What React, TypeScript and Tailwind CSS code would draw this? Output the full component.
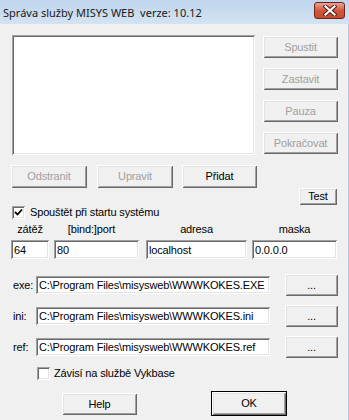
import type { ReactNode } from 'react'

const ui = "font-['Liberation_Sans',Arial,sans-serif] text-[11px] tracking-[-0.15px] leading-none"

const raised =
  'shadow-[inset_1px_1px_0_#ffffff,inset_-1px_-1px_0_#696969,inset_2px_2px_0_#e3e3e3,inset_-2px_-2px_0_#a0a0a0]'
const sunken =
  'shadow-[inset_1px_1px_0_#a0a0a0,inset_-1px_-1px_0_#ffffff,inset_2px_2px_0_#696969,inset_-2px_-2px_0_#e3e3e3]'

function Btn({
  children,
  w,
  h = 'h-[22px]',
  disabled,
  isDefault,
}: {
  children: ReactNode
  w: string
  h?: string
  disabled?: boolean
  isDefault?: boolean
}) {
  return (
    <div
      className={`${w} ${h} shrink-0 flex items-center justify-center bg-[#f0f0f0] ${raised} ${
        isDefault ? 'outline outline-1 outline-black' : ''
      } ${disabled ? 'text-[#a0a0a0]' : 'text-black'}`}
    >
      {children}
    </div>
  )
}

function Field({ value, w }: { value?: string; w: string }) {
  return (
    <div className={`${w} h-[19px] shrink-0 bg-white ${sunken} flex items-center pl-[3px] pt-[1px] text-black whitespace-pre overflow-hidden`}>
      {value}
    </div>
  )
}

function Check({ checked }: { checked?: boolean }) {
  return (
    <div className={`w-[13px] h-[13px] shrink-0 bg-white ${sunken} flex items-center justify-center`}>
      {checked && (
        <svg width="9" height="9" viewBox="0 0 9 9">
          <path d="M1 4 L3.5 6.5 L8 1.5" fill="none" stroke="#000" strokeWidth="1.8" />
        </svg>
      )}
    </div>
  )
}

function PathRow({ label, value }: { label: string; value: string }) {
  return (
    <div className="flex items-center h-[22px]">
      <div className="w-[24px] pl-[1px]">{label}</div>
      <div className={`w-[234px] h-[18px] shrink-0 bg-white ${sunken} flex items-center pl-[3px] pt-[1px] whitespace-pre overflow-hidden`}>
        {value}
      </div>
      <div className="ml-[15px]">
        <Btn w="w-[53px]">...</Btn>
      </div>
    </div>
  )
}

export default function App() {
  return (
    <div className={`w-[349px] h-[420px] overflow-hidden flex flex-col ${ui}`}>
      {/* Title bar */}
      <div className="h-[24px] shrink-0 flex items-center bg-gradient-to-b from-[#bed5ec] to-[#d4e3f2] pr-[4px]">
        <span className="pl-[3px] pt-[1px] font-['Noto_Sans','Open_Sans',sans-serif] text-[11px] tracking-normal text-[#1a1a1a] whitespace-pre mr-auto">
          Správa služby MISYS WEB  verze: 10.12
        </span>
        <div className="w-[31px] h-[17px] mt-[-3px] rounded-[3px] border border-[#6e2419] bg-gradient-to-b from-[#e8a394] via-[#d2573e] to-[#c64a30] flex items-center justify-center">
          <svg width="14" height="11" viewBox="0 0 14 11">
            <path d="M2.5 1.5 L11.5 9.5 M11.5 1.5 L2.5 9.5" stroke="#4a1a12" strokeWidth="4" strokeLinecap="square" />
            <path d="M2.5 1.5 L11.5 9.5 M11.5 1.5 L2.5 9.5" stroke="#ffffff" strokeWidth="2.2" strokeLinecap="square" />
          </svg>
        </div>
      </div>

      {/* Client area */}
      <div className="flex-1 bg-[#f0f0f0] border-r border-[#a9c9ec] flex flex-col">
        {/* List + right buttons */}
        <div className="flex pl-[12px] mt-[11px]">
          <div className={`w-[243px] h-[120px] bg-white ${sunken}`} />
          <div className="ml-[8px] mt-[1px] flex flex-col gap-[10px]">
            <Btn w="w-[75px]" disabled>Spustit</Btn>
            <Btn w="w-[75px]" disabled>Zastavit</Btn>
            <Btn w="w-[75px]" disabled>Pauza</Btn>
            <Btn w="w-[75px]" disabled>Pokračovat</Btn>
          </div>
        </div>

        {/* Edit buttons */}
        <div className="flex pl-[11px] mt-[10px]">
          <Btn w="w-[76px]" h="h-[23px]" disabled>Odstranit</Btn>
          <div className="ml-[10px]">
            <Btn w="w-[76px]" h="h-[23px]" disabled>Upravit</Btn>
          </div>
          <div className="ml-[9px]">
            <Btn w="w-[75px]" h="h-[23px]">Přidat</Btn>
          </div>
        </div>

        {/* Test */}
        <div className="flex justify-end pr-[11px]">
          <Btn w="w-[38px]" h="h-[17px]">Test</Btn>
        </div>

        {/* Autostart */}
        <div className="flex items-center pl-[12px] mt-[1px] h-[13px]">
          <Check checked />
          <span className="ml-[5px]">Spouštět při startu systému</span>
        </div>

        {/* Params */}
        <div className="flex pl-[11px] mt-[5px]">
          <div className="flex flex-col">
            <div className="h-[16px] text-center">zátěž</div>
            <Field w="w-[38px]" value="64" />
          </div>
          <div className="flex flex-col ml-[5px]">
            <div className="h-[16px] text-center pr-[10px]">[bind:]port</div>
            <Field w="w-[85px]" value="80" />
          </div>
          <div className="flex flex-col ml-[7px]">
            <div className="h-[16px] text-center">adresa</div>
            <Field w="w-[101px]" value="localhost" />
          </div>
          <div className="flex flex-col ml-[5px]">
            <div className="h-[16px] text-center">maska</div>
            <Field w="w-[85px]" value="0.0.0.0" />
          </div>
        </div>

        {/* Paths */}
        <div className="flex flex-col gap-[9px] pl-[12px] mt-[15px]">
          <PathRow label="exe:" value="C:\Program Files\misysweb\WWWKOKES.EXE" />
          <PathRow label="ini:" value="C:\Program Files\misysweb\WWWKOKES.ini" />
          <PathRow label="ref:" value="C:\Program Files\misysweb\WWWKOKES.ref" />
        </div>

        {/* Depends */}
        <div className="flex items-center pl-[37px] mt-[9px] h-[13px]">
          <Check />
          <span className="ml-[4px]">Závisí na službě Vykbase</span>
        </div>

        {/* Bottom buttons */}
        <div className="flex items-start mt-[12px]">
          <div className="ml-[62px] mt-[1px]">
            <Btn w="w-[75px]">Help</Btn>
          </div>
          <div className="ml-[75px]">
            <Btn w="w-[74px]" h="h-[23px]" isDefault>OK</Btn>
          </div>
        </div>
      </div>
    </div>
  )
}
